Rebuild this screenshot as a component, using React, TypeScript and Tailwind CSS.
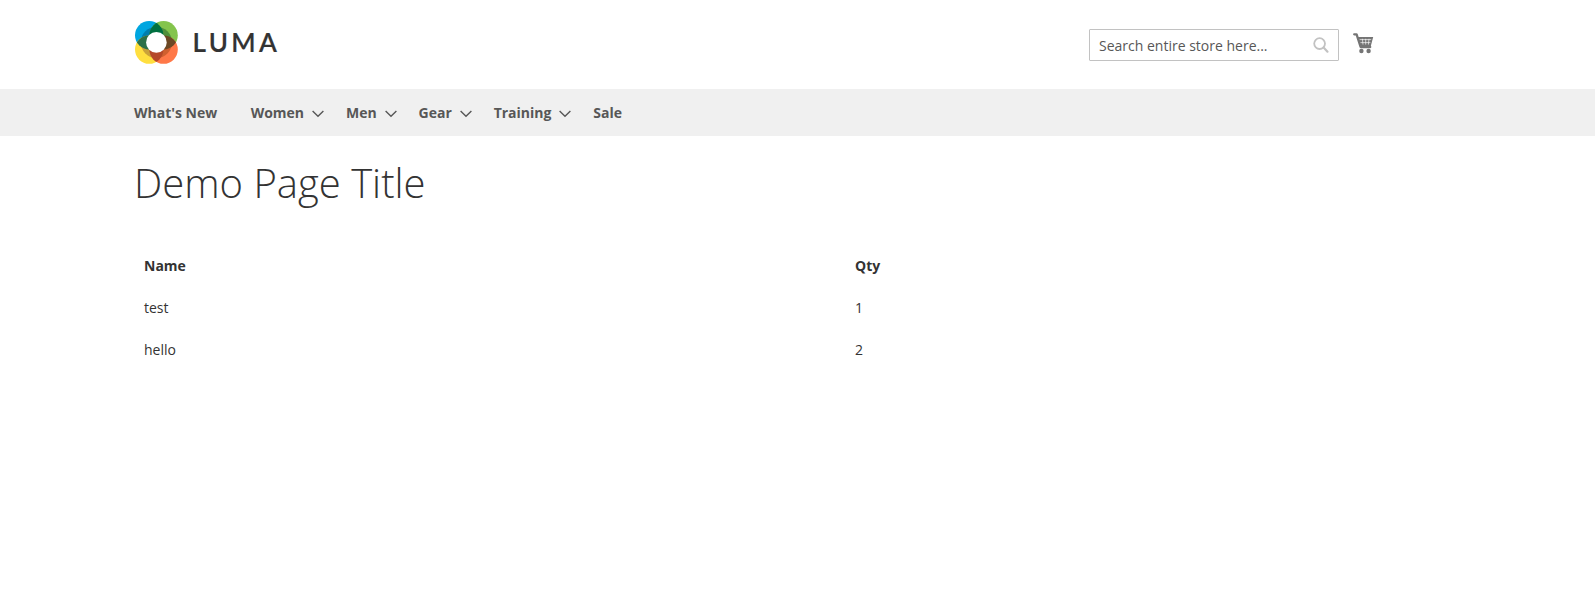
import React from 'react';

const navItems: { label: string; hasMenu: boolean }[] = [
  { label: "What's New", hasMenu: false },
  { label: 'Women', hasMenu: true },
  { label: 'Men', hasMenu: true },
  { label: 'Gear', hasMenu: true },
  { label: 'Training', hasMenu: true },
  { label: 'Sale', hasMenu: false },
];

const rows = [
  { name: 'test', qty: 1 },
  { name: 'hello', qty: 2 },
];

function LogoMark() {
  return (
    <svg width="44" height="44" viewBox="0 0 44 44" className="block shrink-0">
      <defs>
        <clipPath id="tl"><circle cx="15.2" cy="15.2" r="14.2" /></clipPath>
        <clipPath id="tr"><circle cx="29.6" cy="15.2" r="14.2" /></clipPath>
        <clipPath id="bl"><circle cx="15.2" cy="29.6" r="14.2" /></clipPath>
      </defs>
      <circle cx="15.2" cy="15.2" r="14.2" fill="#00a6e0" />
      <circle cx="29.6" cy="15.2" r="14.2" fill="#84c44c" />
      <circle cx="15.2" cy="29.6" r="14.2" fill="#ffdf3f" />
      <circle cx="29.6" cy="29.6" r="14.2" fill="#ff7848" />
      <circle cx="22.4" cy="22.4" r="15.6" fill="#007fae" clipPath="url(#tl)" />
      <circle cx="22.4" cy="22.4" r="15.6" fill="#4f8f3a" clipPath="url(#tr)" />
      <circle cx="22.4" cy="22.4" r="15.6" fill="#c9a23a" clipPath="url(#bl)" />
      <path d="M22.4 22.4H38A15.6 15.6 0 0 1 22.4 38Z" fill="#d0602f" />
      <g clipPath="url(#tr)">
        <circle cx="15.2" cy="15.2" r="14.2" fill="#007040" />
      </g>
      <g clipPath="url(#bl)">
        <circle cx="15.2" cy="15.2" r="14.2" fill="#2c7048" />
        <circle cx="29.6" cy="29.6" r="14.2" fill="#b5482a" />
      </g>
      <g clipPath="url(#tr)">
        <circle cx="29.6" cy="29.6" r="14.2" fill="#6c4824" />
      </g>
      <circle cx="22.4" cy="22.4" r="10.3" fill="#fff" />
    </svg>
  );
}

function Chevron() {
  return (
    <svg width="12" height="8" viewBox="0 0 12 8" className="mt-[3px] -mr-[1px] ml-[8px] block" fill="none" stroke="#575757" strokeWidth="1.4">
      <path d="M0.6 1.1 6 6.3 11.4 1.1" />
    </svg>
  );
}

function CartIcon() {
  return (
    <svg width="21" height="21" viewBox="0 0 21 21" className="block" fill="none" stroke="#757575">
      <path d="M1.2 1.3H3.6L7.6 14H17.2" strokeWidth="2.3" strokeLinejoin="round" strokeLinecap="round" />
      <path d="M4.4 4H20.2L17.8 13H7Z" fill="#757575" stroke="none" />
      <path d="M6.6 6.6H18.2M7.4 9.6H17.4M9.4 5.8 10 11.6M12.7 5.8V11.6M16 5.8 15.4 11.6" stroke="#fff" strokeWidth="0.65" />
      <circle cx="8.4" cy="18" r="2.2" fill="#757575" stroke="none" />
      <circle cx="15.6" cy="18" r="2.2" fill="#757575" stroke="none" />
    </svg>
  );
}

export default function App() {
  return (
    <div className="min-h-screen bg-white font-['Open_Sans',sans-serif] text-sm text-[#333]">
      <header className="ml-[134px] flex h-[89px] w-[1240px] items-start justify-between">
        <a href="#" className="mt-[20px] flex items-center">
          <LogoMark />
          <span className="ml-[14.5px] font-['Lato',sans-serif] text-[26px] leading-[44px] font-semibold tracking-[3.4px] text-[#333] [-webkit-text-stroke:0.2px_#333]">LUMA</span>
        </a>
        <div className="mt-[29px] flex">
          <label className="flex h-8 w-[250px] items-center justify-between rounded-[1px] border border-[#c2c2c2] pr-[8px] pl-[9px]">
            <input
              type="text"
              placeholder="Search entire store here..."
              className="w-[190px] bg-transparent pt-[2px] leading-5 outline-none placeholder:text-[#575757]"
            />
            <svg width="17" height="17" viewBox="0 0 17 17" className="block" fill="none" stroke="#c2c2c2">
              <circle cx="6.6" cy="6.6" r="5.4" strokeWidth="1.8" />
              <path d="M10.6 10.6 14.5 14.7" strokeWidth="2.2" strokeLinecap="round" />
            </svg>
          </label>
          <a href="#" aria-label="Cart" className="mt-[4px] ml-[14px]">
            <CartIcon />
          </a>
        </div>
      </header>

      <nav className="h-[47px] bg-[#f0f0f0] pl-[134px]">
        <ul className="flex h-full">
          {navItems.map((item) => (
            <li key={item.label} className="flex items-center">
              <a href="#" className={item.hasMenu ? 'mr-[22.9px] flex items-center font-bold text-[#575757]' : 'mr-[33.4px] font-bold text-[#575757]'}>
                {item.label}
                {item.hasMenu && <Chevron />}
              </a>
            </li>
          ))}
        </ul>
      </nav>

      <main className="ml-[134px] w-[1240px]">
        <h1 className="pt-[25px] text-[40px] leading-[44px] font-light">Demo Page Title</h1>
        <table className="mt-[40px] w-full table-fixed text-left leading-5">
          <colgroup>
            <col className="w-[711px]" />
            <col />
          </colgroup>
          <thead>
            <tr>
              <th className="px-[10px] py-[11px] font-bold">Name</th>
              <th className="px-[10px] py-[11px] font-bold">Qty</th>
            </tr>
          </thead>
          <tbody>
            {rows.map((row) => (
              <tr key={row.name}>
                <td className="px-[10px] py-[11px]">{row.name}</td>
                <td className="px-[10px] py-[11px]">{row.qty}</td>
              </tr>
            ))}
          </tbody>
        </table>
      </main>
    </div>
  );
}
